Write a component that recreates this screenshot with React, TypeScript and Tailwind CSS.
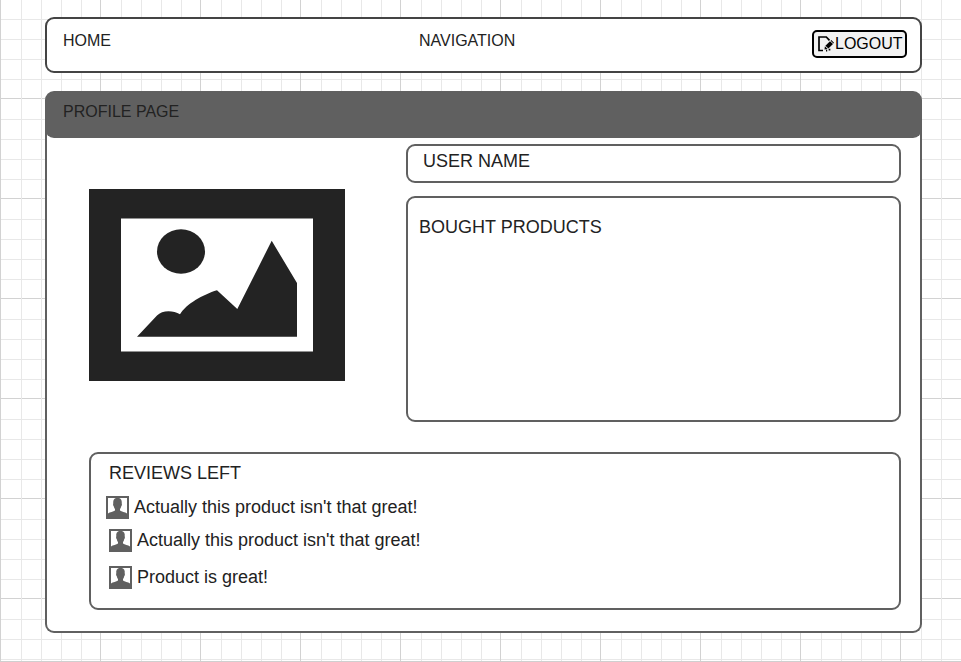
function Avatar() {
  return (
    <svg className="h-[23px] w-[23px] shrink-0" viewBox="0 0 23 23" aria-hidden="true">
      <path fill="#606060" d="M0 0h23v23H0z" />
      <path fill="#fff" d="M2 2h8C8 2.600 6.900 4.500 7.300 7.300C6.800 8 7.200 10 7.900 10.500C8 11.600 8.400 12.400 9 13V14.600C7.500 15.800 3.800 16.200 2 17.500Z" />
      <path fill="#fff" d="M21 2h-8C15 2.600 16.100 4.500 15.700 7.300C16.200 8 15.800 10 15.100 10.500C15 11.600 14.600 12.400 14 13V14.600C15.500 15.800 19.200 16.200 21 17.500Z" />
    </svg>
  );
}

function Picture() {
  return (
    <svg className="mt-[51px] h-48 w-64 shrink-0" viewBox="0 0 256 192" aria-hidden="true">
      <path fill="#232323" d="M0 0h256v192H0z" />
      <path fill="#fff" d="M32 29.500h192v133H32z" />
      <ellipse cx="92" cy="62.500" rx="24" ry="22.200" fill="#232323" />
      <path fill="#232323" d="M48 147.700 68 126.500C73 121 84 121 91 125.300C97 115 114 105.500 128 101.200L148.300 120L182.700 51.800L208 94V147.700Z" />
    </svg>
  );
}

function EditIcon() {
  return (
    <svg className="h-4 w-4 shrink-0" viewBox="0 0 16 16" aria-hidden="true">
      <path d="M5 14.500H1V1h7.300l3.200 3.400M8 14.600h1.200M11.500 12.800v1.700" fill="none" stroke="#000" strokeWidth="1.700" />
      <path d="m6.500 13.500.4-3.200 2.800 2.800zM7.400 9.700l4.600-4.500 3 2.900-4.600 4.500zM12.600 4.700l.7-.6 2.700 2.700-.6.700z" />
    </svg>
  );
}

const reviews = [
  { text: "Actually this product isn't that great!", place: "mt-[13px]" },
  { text: "Actually this product isn't that great!", place: "mt-[10px] ml-[3px]" },
  { text: "Product is great!", place: "mt-[14px] ml-[3px]" },
];

const gridLines = "bg-[linear-gradient(to_right,#d2d2d2_1px,transparent_1px,transparent_21px,#e8e8e8_21px,#e8e8e8_22px,transparent_22px,transparent_41px,#e8e8e8_41px,#e8e8e8_42px,transparent_42px,transparent_61px,#e8e8e8_61px,#e8e8e8_62px,transparent_62px,transparent_81px,#e8e8e8_81px,#e8e8e8_82px,transparent_82px),linear-gradient(to_bottom,#d2d2d2_1px,transparent_1px,transparent_21px,#e8e8e8_21px,#e8e8e8_22px,transparent_22px,transparent_41px,#e8e8e8_41px,#e8e8e8_42px,transparent_42px,transparent_61px,#e8e8e8_61px,#e8e8e8_62px,transparent_62px,transparent_81px,#e8e8e8_81px,#e8e8e8_82px,transparent_82px)]";

export default function App() {
  return (
    <div className={`h-[662px] w-[961px] overflow-hidden border-b border-[#cfcfcf] bg-white bg-size-[100px_100px] bg-position-[0px_-2px] pt-[17px] pl-[45px] font-['Liberation_Sans',Arial,sans-serif] text-[#222] ${gridLines}`}>
      <header className="flex h-14 w-[877px] items-start justify-between rounded-[9px] border-2 border-[#444] bg-white pr-[13px] pl-4 text-base leading-[18px]">
        <a className="mt-[13px] w-[356px]">HOME</a>
        <nav className="mt-[13px] flex-1">NAVIGATION</nav>
        <button className="mt-[11px] flex h-7 w-[95px] items-start rounded-[5px] border-2 border-black bg-[#f2f2f2] pt-[3px] pl-1 text-black">
          <span className="mt-px">
            <EditIcon />
          </span>
          <span className="ml-px">LOGOUT</span>
        </button>
      </header>

      <main className="mt-[18px] h-[542px] w-[877px] rounded-[9px] bg-white">
        <h1 className="h-[47px] rounded-[9px] bg-[#606060] pt-3 pl-[18px] text-base leading-[18px]">PROFILE PAGE</h1>
        <div className="-mt-[9px] h-[504px] rounded-b-[9px] border-2 border-t-0 border-[#606060] pt-[15px] pr-[19px] pl-[42px] text-lg leading-5">
          <div className="flex justify-between">
            <div className="-mt-[6px]">
              <Picture />
            </div>
            <div className="w-[495px]">
              <section className="h-[39px] rounded-[9px] border-2 border-[#606060] pt-[5px] pl-[15px]">USER NAME</section>
              <section className="mt-[13px] h-[226px] rounded-[9px] border-2 border-[#606060] pt-[19px] pl-[11px]">BOUGHT PRODUCTS</section>
            </div>
          </div>
          <section className="mt-[30px] h-[158px] rounded-[9px] border-2 border-[#606060] pt-[9px] pl-[15px]">
            <h2 className="ml-[3px]">REVIEWS LEFT</h2>
            {reviews.map((review, index) => (
              <div key={index} className={`flex h-[23px] gap-[5px] ${review.place}`}>
                <Avatar />
                <span className="mt-px">{review.text}</span>
              </div>
            ))}
          </section>
        </div>
      </main>
    </div>
  );
}
